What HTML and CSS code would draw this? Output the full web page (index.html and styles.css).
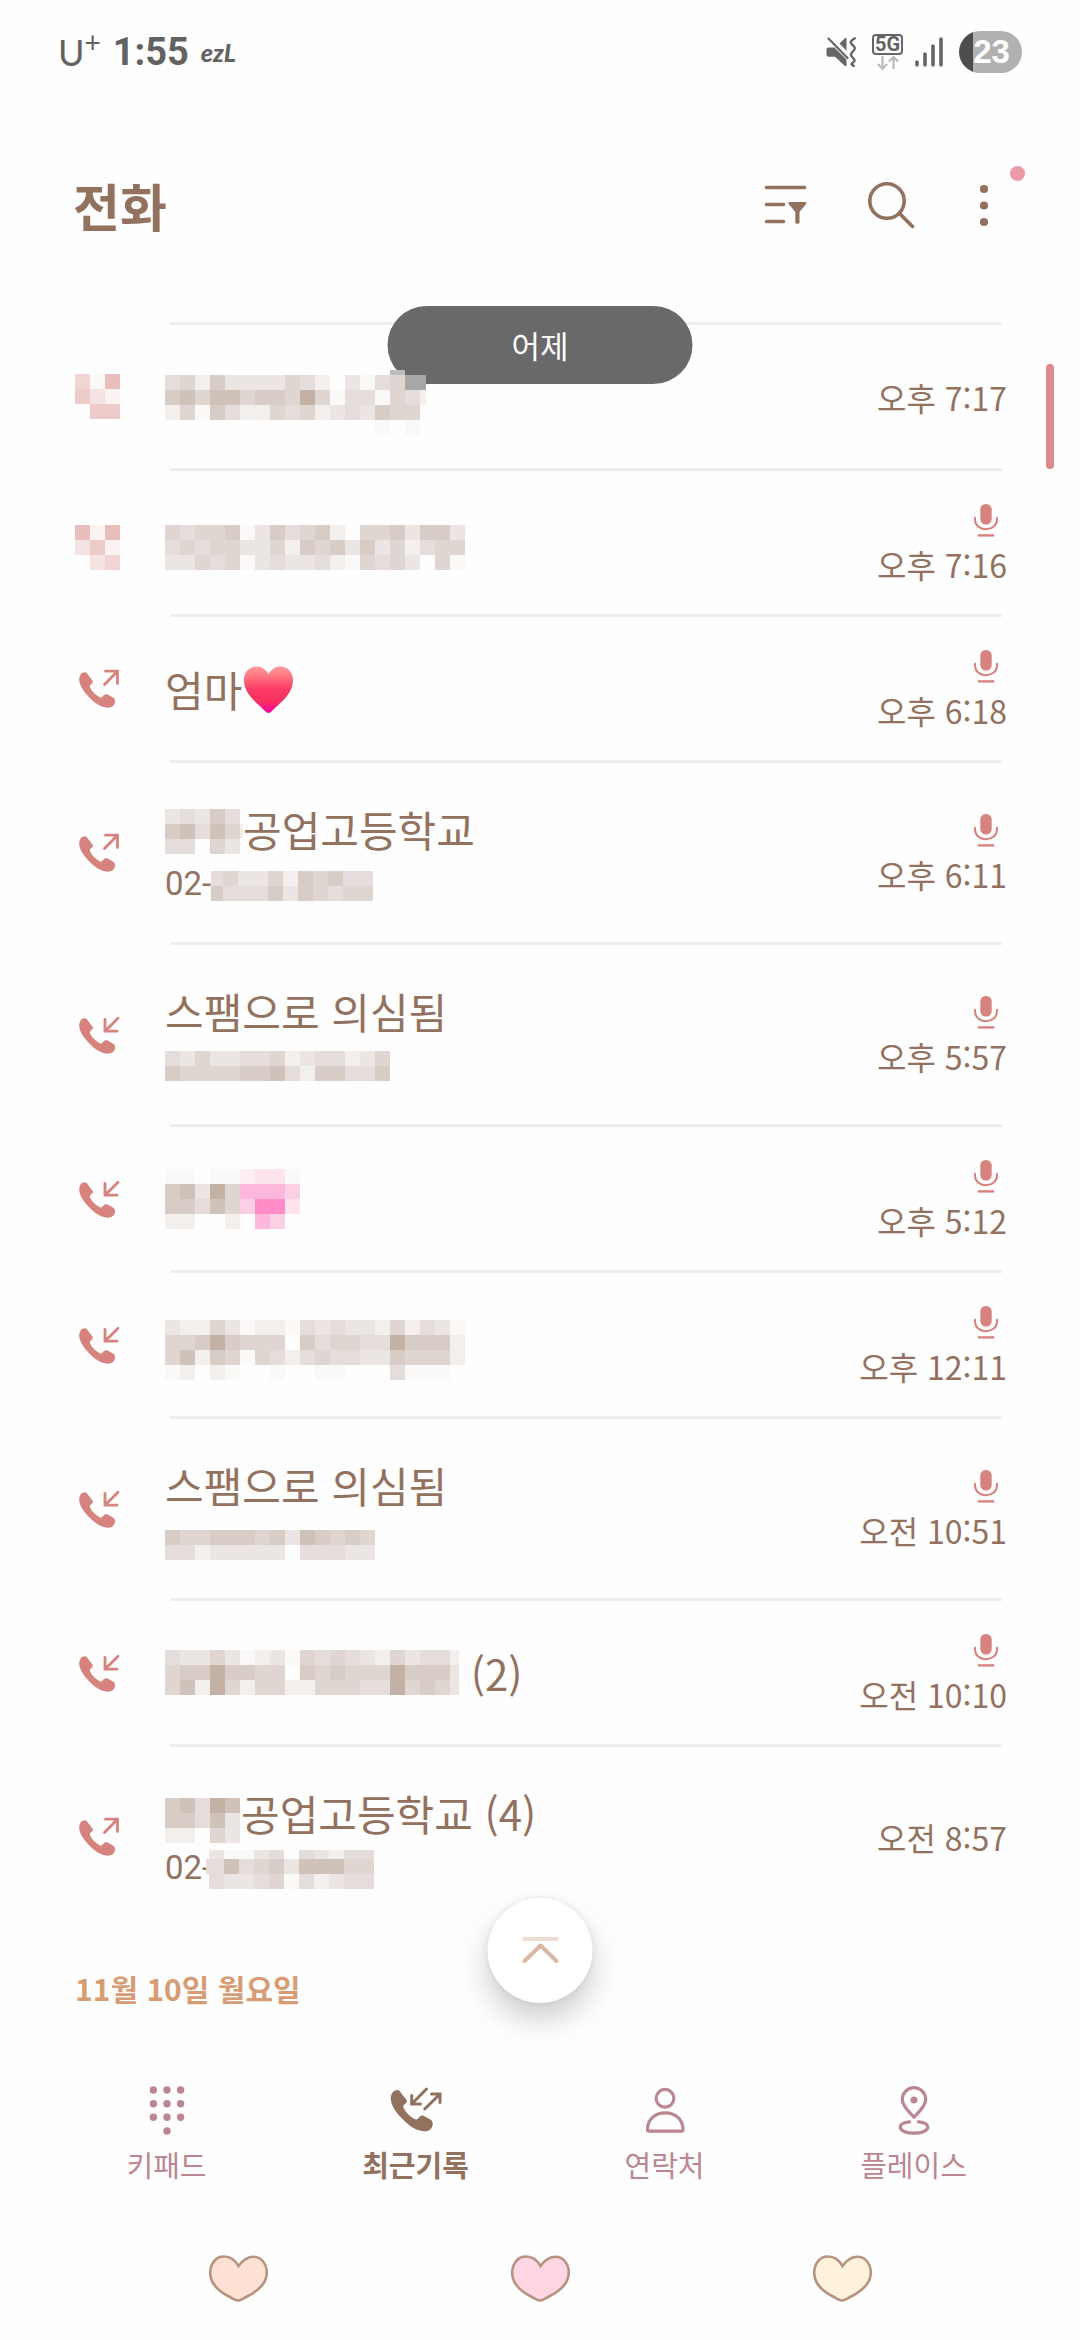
FILE: index.html
```html
<!DOCTYPE html>
<html lang="ko">
<head>
<meta charset="utf-8">
<meta name="viewport" content="width=device-width, initial-scale=1">
<title>전화</title>
<link rel="stylesheet" href="styles.css">
</head>
<body>
<svg class="defs" aria-hidden="true">
  <defs>
    <symbol id="handset" viewBox="0 0 45 45">
      <path d="M4.2 13.5C4.2 9.5 6.5 6.3 9.5 6.3c1.7 0 2.5.9 3.3 2.3l4.8 6.2c.6 1.2.2 2.2-.8 3-1.6 1.2-2.3 2-1.8 3.5 2 4.5 5.5 7.7 9.6 9.9 1.4.6 2.4.2 3.4-1 1.4-1.8 3-2.4 4.6-1.6l5.8 3.2c1.4 1 1.8 2.6 1.6 4.5-.6 3.7-4 5.7-7.5 5.4C26 41.2 19.5 37 14 31 8 25 4.2 18.5 4.2 13.5Z" fill="currentColor"/>
    </symbol>
    <symbol id="call-out" viewBox="0 0 45 45">
      <use href="#handset"/>
      <path d="M29.5 18.5 42.3 5.4M30.5 5.2h12v12.4" fill="none" stroke="currentColor" stroke-width="2.8" stroke-linecap="round"/>
    </symbol>
    <symbol id="call-in" viewBox="0 0 45 45">
      <use href="#handset"/>
      <path d="M43 6.2 30.2 19M30 7.4v11.8h12" fill="none" stroke="currentColor" stroke-width="2.8" stroke-linecap="round"/>
    </symbol>
    <symbol id="mic" viewBox="0 0 24 33">
      <rect x="6.3" y="0" width="11.4" height="20.5" rx="5.4" fill="currentColor"/>
      <path d="M1 13.8v1.4C1 21.500 6 25.300 12 25.300s11-3.800 11-10.100v-1.400" fill="none" stroke="currentColor" stroke-width="2" stroke-linecap="round"/>
      <path d="M3.800 31.400h16.400" stroke="currentColor" stroke-width="2.400"/>
    </symbol>
    <symbol id="heart" viewBox="0 0 59 47">
      <path d="M29.500 11C26 4.800 21 1.500 15 1.500 6.500 1.500 1.200 9 1.200 17.500 1.200 30 12 37.500 20 41.500c4 2 6 4 9 4s5-2 9-4c9-4.500 19.800-12 19.800-24C57.800 9 52.500 1.800 44.500 1.800c-6.500 0-11 3.700-15 9.200Z" stroke="#b7937f" stroke-width="2.600"/>
    </symbol>
    <linearGradient id="heart-fill" x1="0" y1="0" x2="0" y2="1">
      <stop offset="0" stop-color="#ff9a9a"/>
      <stop offset=".22" stop-color="#ff7480"/>
      <stop offset=".5" stop-color="#fb3a63"/>
      <stop offset=".75" stop-color="#f9305f"/>
      <stop offset="1" stop-color="#f700a8"/>
    </linearGradient>
  </defs>
</svg>

<div class="screen">
  <div class="status">
    <div class="status-left">
      <span class="carrier">U<sup>+</sup></span>
      <time class="clock">1:55</time>
      <span class="app-tag">ezL</span>
    </div>
    <div class="status-right">
      <svg width="30" height="30" viewBox="0 0 30 30" aria-label="진동">
        <path d="M2.500 10.500h6L20.500 22.500v6.500h-1.500L9 19.800H3.500C1.500 19.800.5 19 .5 17v-4c0-1.600.8-2.500 2-2.500ZM13.500 6.500l5.500-5.300c.8-.7 1.500-.4 1.500.6v12Z" fill="#666"/>
        <path d="M2.500 1.500l19 19.500" stroke="#666" stroke-width="2.200" stroke-linecap="round"/>
        <path d="M28.800 1.300c-5 3.200-5 4.200-2.200 6.700s3 3.500.4 6.300-2.800 3.600-.4 6.200 2.800 3.400.4 4.900c-2.400 1.500-1.600 2.400.8 3.400" fill="none" stroke="#666" stroke-width="2.400" stroke-linecap="round"/>
      </svg>
      <div class="network">
        <span class="network-type">5G</span>
        <svg width="22" height="14" viewBox="0 0 22 14" aria-hidden="true">
          <path d="M5.500 0v12M.8 8l4.700 4.700L10.200 8M16.500 13V1M11.800 5.500 16.500 1l4.700 4.500" fill="none" stroke="#bbb" stroke-width="2.200"/>
        </svg>
      </div>
      <svg class="signal" width="28" height="30" viewBox="0 0 28 30" aria-label="신호">
        <path d="M2 25v3M10 17v11M18 9v19M26 2v26" stroke="#666" stroke-width="3.600" stroke-linecap="round"/>
      </svg>
      <span class="battery">23</span>
    </div>
  </div>

  <header class="header">
    <h1>전화</h1>
    <button class="icon-button" type="button" aria-label="필터">
      <svg width="60" height="48" viewBox="0 0 60 48">
        <path d="M4.500 6.500h38M4.500 23.500h17M4.500 40.500h17" stroke="currentColor" stroke-width="3.600" stroke-linecap="round"/>
        <path d="M27.500 21h15.500c1.400 0 1.700 1 1 2l-6.500 8v10.500c0 1.800-4.200 1.800-4.200 0V31l-6.600-8c-.8-1-.5-2 .8-2Z" fill="currentColor"/>
      </svg>
    </button>
    <button class="icon-button" type="button" aria-label="검색">
      <svg width="48" height="48" viewBox="0 0 48 48">
        <circle cx="20" cy="20" r="17.200" fill="none" stroke="currentColor" stroke-width="3.600"/>
        <path d="M32.500 32.500 45.500 45.500" stroke="currentColor" stroke-width="3.600" stroke-linecap="round"/>
      </svg>
    </button>
    <button class="icon-button" type="button" aria-label="더보기">
      <svg width="48" height="48" viewBox="0 0 48 48" fill="currentColor">
        <circle cx="24" cy="8" r="4.100"/><circle cx="24" cy="24.500" r="4.100"/><circle cx="24" cy="41" r="4.100"/>
      </svg>
      <span class="badge"></span>
    </button>
  </header>

  <main class="log">
    <div class="date-pill">어제</div>
    <div class="scrollbar"></div>

    <ul class="calls">
      <li class="call">
        <svg class="mosaic" viewBox="0 0 45 45" width="45" height="45" data-cells="qas/rpt/.rr"></svg>
        <div class="who">
          <div class="name"><svg class="mosaic" viewBox="0 -2 261 77" width="261" height="77" data-top="10" data-cells="...............H../debfccccedb.cadeGG/fgeggeffeheaddaedb/beafdbbedebcdcfee./..............a.a."></svg></div>
        </div>
        <div class="when"><time>오후 7:17</time></div>
      </li>
      <li class="call">
        <svg class="mosaic" viewBox="0 -10 45 55" width="45" height="55" data-cells="sts/prt/.pq"></svg>
        <div class="who">
          <div class="name"><svg class="mosaic" viewBox="0 -10 300 55" width="300" height="55" data-cells="edeefacfdefb.eefcffc/dedeeccebfefcfcebdee/ccedeacdccdbaedec.ea"></svg></div>
        </div>
        <div class="when recorded"><svg class="mic" aria-label="녹음됨"><use href="#mic"/></svg><time>오후 7:16</time></div>
      </li>
      <li class="call">
        <svg class="kind" aria-label="발신"><use href="#call-out"/></svg>
        <div class="who">
          <div class="name"><span>엄마</span><svg width="52" height="50" viewBox="0 -2 52 50" aria-label="하트">
            <path d="M26.500 8C23.500 3 19.500.5 14.500.5 7 .5 2 6.500 2 14c0 14 12.500 22.500 21 31 2.500 2.600 4.500 2.600 7 0 8.500-8.500 21-17 21-31C51 6.500 46 .5 38.500.5c-5 0-9 2.500-12 7.500Z" fill="url(#heart-fill)"/>
          </svg></div>
        </div>
        <div class="when recorded"><svg class="mic" aria-label="녹음됨"><use href="#mic"/></svg><time>오후 6:18</time></div>
      </li>
      <li class="call tall">
        <svg class="kind" aria-label="발신"><use href="#call-out"/></svg>
        <div class="who">
          <div class="name"><svg class="mosaic" viewBox="0 -6 78 51" width="78" height="51" data-cells="cdcfd./fgdgeb/dd.ec."></svg><span>공업고등학교</span></div>
          <div class="number"><span>02-</span><svg class="mosaic" viewBox="3 -4 162 34" width="162" height="34" data-cells="deccebfefdd/fdddfcfedee"></svg></div>
        </div>
        <div class="when recorded"><svg class="mic" aria-label="녹음됨"><use href="#mic"/></svg><time>오후 6:11</time></div>
      </li>
      <li class="call tall">
        <svg class="kind" aria-label="수신"><use href="#call-in"/></svg>
        <div class="who">
          <div class="name"><span>스팸으로 의심됨</span></div>
          <div class="number"><svg class="mosaic" viewBox="0 0 225 30" width="225" height="30" data-cells="dceccddebcddbce/feeeeffgdbffddf"></svg></div>
        </div>
        <div class="when recorded"><svg class="mic" aria-label="녹음됨"><use href="#mic"/></svg><time>오후 5:57</time></div>
      </li>
      <li class="call">
        <svg class="kind" aria-label="수신"><use href="#call-in"/></svg>
        <div class="who">
          <div class="name"><svg class="mosaic" viewBox="0 0 135 60" width="135" height="60" data-cells="aa.aaABBa/fgcheDDDC/ffdgeCEEB/bb..b.DC."></svg></div>
        </div>
        <div class="when recorded"><svg class="mic" aria-label="녹음됨"><use href="#mic"/></svg><time>오후 5:12</time></div>
      </li>
      <li class="call">
        <svg class="kind" aria-label="수신"><use href="#call-in"/></svg>
        <div class="who">
          <div class="name"><svg class="mosaic" viewBox="0 -10 300 70" width="300" height="70" data-cells="cbbecabbadcdccbebdca/eefhfeee.fdeeddhfffb/egbfeaedbdeddccfeeeb/ab.ba..a..aa...daaa."></svg></div>
        </div>
        <div class="when recorded"><svg class="mic" aria-label="녹음됨"><use href="#mic"/></svg><time>오후 12:11</time></div>
      </li>
      <li class="call tall">
        <svg class="kind" aria-label="수신"><use href="#call-in"/></svg>
        <div class="who">
          <div class="name"><span>스팸으로 의심됨</span></div>
          <div class="number"><svg class="mosaic" viewBox="0 -10 210 40" width="210" height="40" data-cells="feefffefcgfefe/ddbccccc.dddcc"></svg></div>
        </div>
        <div class="when recorded"><svg class="mic" aria-label="녹음됨"><use href="#mic"/></svg><time>오전 10:51</time></div>
      </li>
      <li class="call">
        <svg class="kind" aria-label="수신"><use href="#call-in"/></svg>
        <div class="who">
          <div class="name"><svg class="mosaic" viewBox="0 0 294 45" width="294" height="45" data-cells="dccecabcaededcbecddb/effhffee.fefeeehfffc/egbhebeebbeeeddhefec"></svg><span>&nbsp;(2)</span></div>
        </div>
        <div class="when recorded"><svg class="mic" aria-label="녹음됨"><use href="#mic"/></svg><time>오전 10:10</time></div>
      </li>
      <li class="call tall">
        <svg class="kind" aria-label="발신"><use href="#call-out"/></svg>
        <div class="who">
          <div class="name"><svg class="mosaic" viewBox="0 -16 76 61" width="76" height="61" data-cells="fgdhg/ffdgc/bb.ec"></svg><span>공업고등학교 (4)</span></div>
          <div class="number"><span>02-</span><svg class="mosaic overlap" viewBox="12 2 168 43" width="168" height="43" data-top="6" data-cells=".caacd.dcbdd/ddgdefcgggee/.dccdeadbcdd"></svg></div>
        </div>
        <div class="when"><time>오전 8:57</time></div>
      </li>
    </ul>

    <h2 class="date">11월 10일 월요일</h2>

    <button class="to-top" type="button" aria-label="맨 위로">
      <svg width="40" height="32" viewBox="0 0 40 32" fill="none" stroke-width="4" stroke-linecap="round" stroke-linejoin="round">
        <path d="M4 4h32" stroke="#ecdcd3"/>
        <path d="M4 26 20 10.500 36 26" stroke="#d8b8a5"/>
      </svg>
    </button>
  </main>

  <nav class="tabs">
    <a class="tab" href="#keypad">
      <svg width="50" height="50" viewBox="0 0 50 50" fill="currentColor">
        <circle cx="11.400" cy="4" r="3.700"/><circle cx="25" cy="4" r="3.700"/><circle cx="38.600" cy="4" r="3.700"/>
        <circle cx="11.400" cy="17.700" r="3.700"/><circle cx="25" cy="17.700" r="3.700"/><circle cx="38.600" cy="17.700" r="3.700"/>
        <circle cx="11.400" cy="31.300" r="3.700"/><circle cx="25" cy="31.300" r="3.700"/><circle cx="38.600" cy="31.300" r="3.700"/>
        <circle cx="25" cy="45" r="3.700"/>
      </svg>
      <span>키패드</span>
    </a>
    <a class="tab current" href="#recents" aria-current="page">
      <svg width="52" height="50" viewBox="0 0 52 50">
        <use href="#handset" x="-4.100" y="-3.400" width="52.600" height="52.600"/>
        <path d="M36.500 3 21.900 17.800M21.700 9.500V18h8.800M34.700 23 49.800 8.200M41.500 8H50v8.500" fill="none" stroke="currentColor" stroke-width="3" stroke-linecap="round"/>
      </svg>
      <span>최근기록</span>
    </a>
    <a class="tab" href="#contacts">
      <svg width="50" height="50" viewBox="0 0 50 50" fill="none" stroke="currentColor" stroke-width="3.200" stroke-linejoin="round">
        <circle cx="25" cy="12.300" r="8.900"/>
        <path d="M7.500 43.500C7.500 33.500 15 26.800 25.200 26.800S43 33.500 43 43.500c0 1.200-.5 1.600-1.500 1.600H9c-1 0-1.500-.4-1.500-1.600Z"/>
      </svg>
      <span>연락처</span>
    </a>
    <a class="tab" href="#places">
      <svg width="50" height="50" viewBox="0 0 50 50" fill="none" stroke="currentColor" stroke-width="3.200" stroke-linecap="round">
        <path d="M25 31.200C21.500 27 13.300 20.500 13.300 13.400a11.700 11.700 0 0 1 23.400 0C36.700 20.500 28.500 27 25 31.200Z" stroke-linejoin="round"/>
        <circle cx="25" cy="14" r="3.600" fill="currentColor" stroke="none"/>
        <path d="M20.500 35.800C14.500 36.300 11.200 38.300 11.200 41c0 3.600 5.800 6.200 13.800 6.200S38.800 44.600 38.800 41c0-2.700-3.300-4.700-9.300-5.200"/>
      </svg>
      <span>플레이스</span>
    </a>
  </nav>

  <div class="system">
    <button type="button" aria-label="최근 앱"><svg class="heart peach"><use href="#heart"/></svg></button>
    <button type="button" aria-label="홈"><svg class="heart pink"><use href="#heart"/></svg></button>
    <button type="button" aria-label="뒤로"><svg class="heart cream"><use href="#heart"/></svg></button>
  </div>
</div>
<script src="mosaic.js"></script>
</body>
</html>
```

FILE: styles.css
```css
* {
  box-sizing: border-box;
}

body {
  margin: 0;
  background: #fefefe;
  color: #92725f;
  font-family: "Noto Sans CJK KR", "Noto Sans", sans-serif;
}

button {
  padding: 0;
  border: 0;
  background: none;
  color: inherit;
  font: inherit;
}

svg {
  display: block;
  flex: none;
}

.defs {
  position: absolute;
  width: 0;
  height: 0;
}

.screen {
  display: flex;
  flex-direction: column;
  min-height: 100vh;
}

/* Status bar */
.status {
  display: flex;
  justify-content: space-between;
  align-items: center;
  height: 104px;
  padding: 0 58px;
  color: #626262;
}

.status-left,
.status-right {
  display: flex;
  align-items: center;
}

.status-left {
  gap: 12px;
}

.carrier {
  font: 400 36px/40px Lato, sans-serif;
}

.carrier sup {
  font-size: 28px;
  line-height: 0;
}

.clock {
  font: 700 38px/40px Roboto, sans-serif;
}

.app-tag {
  font: italic 900 25px/40px Lato, sans-serif;
}

.status-right {
  gap: 16px;
}

.network {
  display: flex;
  flex-direction: column;
  align-items: center;
  gap: 1px;
}

.network-type {
  width: 31px;
  border: 2px solid #666;
  border-radius: 4px;
  font: 700 20px/17px Roboto, sans-serif;
  text-align: center;
}

.signal {
  margin-left: -4px;
}

.battery {
  width: 63px;
  padding-left: 2px;
  border-radius: 21px;
  background: linear-gradient(90deg, #4d4d4d 14px, #b1b1b1 14px);
  color: #fff;
  font: 700 33px/42px "Liberation Sans", sans-serif;
  text-align: center;
}

/* App header */
.header {
  display: flex;
  align-items: center;
  gap: 45px;
  height: 202px;
  padding: 0 72px 0 73px;
}

.header h1 {
  flex: 1;
  margin: 0;
  font-size: 51px;
  line-height: 60px;
  font-weight: 700;
}

.icon-button {
  position: relative;
}

.badge {
  position: absolute;
  top: -15px;
  right: -17px;
  width: 15px;
  height: 15px;
  border-radius: 50%;
  background: #ec9aa8;
}

/* Call log */
.log {
  position: relative;
  padding-top: 16px;
}

.date-pill {
  position: absolute;
  z-index: 1;
  top: 0;
  left: 50%;
  width: 305px;
  border-radius: 39px;
  background: rgba(100, 100, 102, .97);
  color: #fff;
  font-size: 31px;
  line-height: 78px;
  text-align: center;
  transform: translateX(-50%);
}

.scrollbar {
  position: absolute;
  top: 58px;
  right: 26px;
  width: 8px;
  height: 105px;
  border-radius: 4px;
  background: #dc8a8c;
}

.calls {
  margin: 0;
  padding: 0;
  list-style: none;
}

.call {
  display: flex;
  align-items: center;
  gap: 45px;
  min-height: 146px;
  padding: 3px 73px 0 75px;
  background: linear-gradient(#eee, #eee) 170px 0 / calc(100% - 248px) 3px no-repeat;
}

.call.tall {
  min-height: 182px;
}

.kind {
  width: 45px;
  height: 45px;
  color: #d6837d;
}

.who {
  flex: 1;
}

.name,
.number {
  display: flex;
  align-items: center;
}

.name {
  font-size: 42px;
  line-height: 60px;
}

.tall .name {
  height: 60px;
}

.number {
  height: 46px;
  margin-top: 2px;
  font: 400 33px/46px Roboto, sans-serif;
}

.mosaic {
  position: relative;
  z-index: 2;
}

.overlap {
  margin-left: -5px;
}

.when {
  display: flex;
  flex-direction: column;
  align-items: flex-end;
  font-size: 32px;
  line-height: 46px;
}

.recorded {
  gap: 4px;
  padding-top: 6px;
}

.mic {
  width: 24px;
  height: 33px;
  margin-right: 9px;
  color: #d6837d;
}

.date {
  margin: 0;
  padding: 0 75px;
  color: #d89c74;
  font-size: 30px;
  line-height: 124px;
  font-weight: 700;
}

.to-top {
  position: absolute;
  bottom: 47px;
  left: 50%;
  display: grid;
  place-items: center;
  width: 105px;
  height: 105px;
  border-radius: 50%;
  background: #fff;
  box-shadow: 0 16px 32px rgba(0, 0, 0, .2), 0 0 6px rgba(0, 0, 0, .08);
  transform: translateX(-50%);
}

/* Bottom tabs */
.tabs {
  display: grid;
  grid-template-columns: repeat(4, 1fr);
  padding: 36px 42px 0;
}

.tab {
  display: flex;
  flex-direction: column;
  align-items: center;
  gap: 7px;
  color: #bb8690;
  font-size: 29px;
  line-height: 42px;
  text-decoration: none;
}

.tab.current {
  color: #92725f;
  font-weight: 700;
}

.system {
  display: grid;
  grid-template-columns: repeat(3, 1fr);
  padding: 70px 87px 32px;
}

.system button {
  display: grid;
  place-items: center;
}

.heart {
  width: 59px;
  height: 47px;
}

.peach {
  fill: #ffe1d4;
}

.pink {
  fill: #ffd6e2;
}

.cream {
  fill: #fff2da;
}
```

FILE: mosaic.js
```js
// Fills each .mosaic with 15px tiles. Rows are split by "/", "." leaves a gap.
const TILE = 15;
const COLORS = {
  a: "#faf9f8", b: "#f2efed", c: "#ebe6e4", d: "#e5dddb", e: "#dfd6d2",
  f: "#d8cdc6", g: "#cfc2b9", h: "#c4b1a5",
  p: "#f5e3e3", q: "#f1d5d4", r: "#edcbca", s: "#e8bfbd", t: "#fbf2f2",
  A: "#fdeef5", B: "#fde3ee", C: "#fcd0e4", D: "#fdb7da", E: "#ff8bc7",
  G: "#a9a8a8", H: "#bcbcbe"
};

for (const svg of document.querySelectorAll(".mosaic")) {
  const crop = Number(svg.dataset.top || 0);
  svg.dataset.cells.split("/").forEach((row, y) => {
    [...row].forEach((key, x) => {
      if (key === ".") return;
      const cut = y === 0 ? crop : 0;
      const tile = document.createElementNS("http://www.w3.org/2000/svg", "rect");
      tile.setAttribute("x", x * TILE);
      tile.setAttribute("y", y * TILE + cut);
      tile.setAttribute("width", TILE);
      tile.setAttribute("height", TILE - cut);
      tile.setAttribute("fill", COLORS[key]);
      tile.setAttribute("shape-rendering", "crispEdges");
      svg.append(tile);
    });
  });
}
```
